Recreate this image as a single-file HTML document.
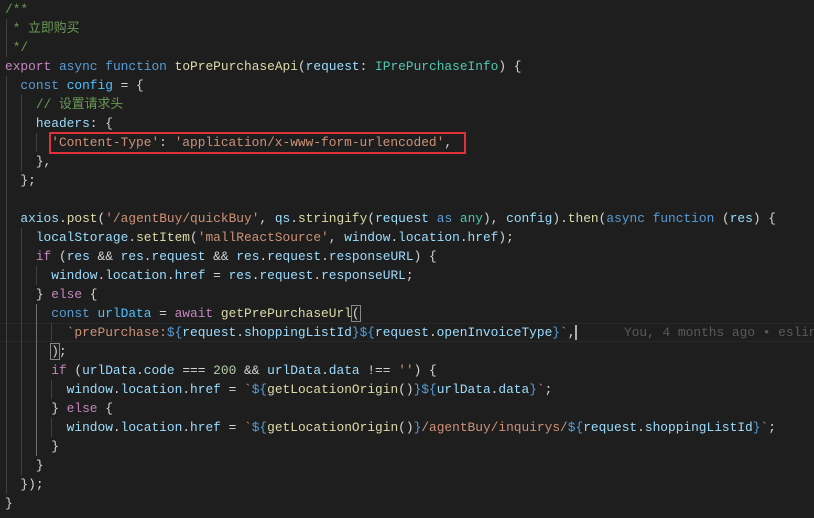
<!DOCTYPE html><html><head><meta charset="utf-8"><style>
body{margin:0;background:#1e1e1e;width:814px;height:518px;overflow:hidden;position:relative;font-family:"Liberation Mono","Noto Sans CJK SC",monospace;font-size:12.85px;color:#d4d4d4}
.l{position:absolute;left:5px;height:19px;line-height:19px;white-space:pre}
.k{color:#569cd6}.c{color:#c586c0}.f{color:#dcdcaa}.v{color:#9cdcfe}.s{color:#ce9178}.t{color:#4ec9b0}.m{color:#6a9955}.n{color:#b5cea8}.o{color:#4fc1ff}
.g{position:absolute;width:1px;background:#404040}
</style></head><body>
<div style="position:absolute;left:0;top:323px;width:814px;height:19px;border-top:1px solid #282828;border-bottom:1px solid #282828;box-sizing:border-box"></div>
<div class="g" style="left:6px;top:19px;height:38px"></div>
<div class="g" style="left:6px;top:76px;height:418px"></div>
<div class="g" style="left:21px;top:95px;height:76px"></div>
<div class="g" style="left:21px;top:228px;height:247px"></div>
<div class="g" style="left:36px;top:133px;height:19px"></div>
<div class="g" style="left:36px;top:266px;height:19px"></div>
<div class="g" style="left:36px;top:304px;height:152px;background:#707070"></div>
<div class="g" style="left:51px;top:323px;height:19px"></div>
<div class="g" style="left:51px;top:380px;height:19px"></div>
<div class="g" style="left:51px;top:418px;height:19px"></div>
<div class="l m" style="top:0">/**</div>
<div class="l m" style="top:19px"> * 立即购买</div>
<div class="l m" style="top:38px"> */</div>
<div class="l" style="top:57px"><span class="c">export</span> <span class="k">async</span> <span class="k">function</span> <span class="f">toPrePurchaseApi</span>(<span class="v">request</span>: <span class="t">IPrePurchaseInfo</span>) {</div>
<div class="l" style="top:76px">  <span class="k">const</span> <span class="o">config</span> = {</div>
<div class="l" style="top:95px">    <span class="m">// 设置请求头</span></div>
<div class="l" style="top:114px">    <span class="v">headers</span>: {</div>
<div class="l" style="top:133px">      <span class="s">'Content-Type'</span>: <span class="s">'application/x-www-form-urlencoded'</span>,</div>
<div class="l" style="top:152px">    },</div>
<div class="l" style="top:171px">  };</div>
<div class="l" style="top:209px">  <span class="v">axios</span>.<span class="f">post</span>(<span class="s">'/agentBuy/quickBuy'</span>, <span class="v">qs</span>.<span class="f">stringify</span>(<span class="v">request</span> <span class="k">as</span> <span class="t">any</span>), <span class="v">config</span>).<span class="f">then</span>(<span class="k">async</span> <span class="k">function</span> (<span class="v">res</span>) {</div>
<div class="l" style="top:228px">    <span class="v">localStorage</span>.<span class="f">setItem</span>(<span class="s">'mallReactSource'</span>, <span class="v">window</span>.<span class="v">location</span>.<span class="v">href</span>);</div>
<div class="l" style="top:247px">    <span class="c">if</span> (<span class="v">res</span> &amp;&amp; <span class="v">res</span>.<span class="v">request</span> &amp;&amp; <span class="v">res</span>.<span class="v">request</span>.<span class="v">responseURL</span>) {</div>
<div class="l" style="top:266px">      <span class="v">window</span>.<span class="v">location</span>.<span class="v">href</span> = <span class="v">res</span>.<span class="v">request</span>.<span class="v">responseURL</span>;</div>
<div class="l" style="top:285px">    } <span class="c">else</span> {</div>
<div class="l" style="top:304px">      <span class="k">const</span> <span class="o">urlData</span> = <span class="c">await</span> <span class="f">getPrePurchaseUrl</span><span style="outline:1px solid #888">(</span></div>
<div class="l" style="top:323px">        <span class="s">`prePurchase:</span><span class="k">${</span><span class="v">request</span>.<span class="v">shoppingListId</span><span class="k">}${</span><span class="v">request</span>.<span class="v">openInvoiceType</span><span class="k">}</span><span class="s">`</span>,<span style="border-left:2px solid #aeafad"></span></div>
<div class="l" style="top:323px;left:624px;color:#5a5a5a">You, 4 months ago • eslint</div>
<div class="l" style="top:342px">      <span style="outline:1px solid #888">)</span>;</div>
<div class="l" style="top:361px">      <span class="c">if</span> (<span class="v">urlData</span>.<span class="v">code</span> === <span class="n">200</span> &amp;&amp; <span class="v">urlData</span>.<span class="v">data</span> !== <span class="s">''</span>) {</div>
<div class="l" style="top:380px">        <span class="v">window</span>.<span class="v">location</span>.<span class="v">href</span> = <span class="s">`</span><span class="k">${</span><span class="f">getLocationOrigin</span>()<span class="k">}${</span><span class="v">urlData</span>.<span class="v">data</span><span class="k">}</span><span class="s">`</span>;</div>
<div class="l" style="top:399px">      } <span class="c">else</span> {</div>
<div class="l" style="top:418px">        <span class="v">window</span>.<span class="v">location</span>.<span class="v">href</span> = <span class="s">`</span><span class="k">${</span><span class="f">getLocationOrigin</span>()<span class="k">}</span><span class="s">/agentBuy/inquirys/</span><span class="k">${</span><span class="v">request</span>.<span class="v">shoppingListId</span><span class="k">}</span><span class="s">`</span>;</div>
<div class="l" style="top:437px">      }</div>
<div class="l" style="top:456px">    }</div>
<div class="l" style="top:475px">  });</div>
<div class="l" style="top:494px">}</div>
<div style="position:absolute;left:49px;top:132px;width:417px;height:22px;border:2px solid #e0303a;box-sizing:border-box"></div>
</body></html>
